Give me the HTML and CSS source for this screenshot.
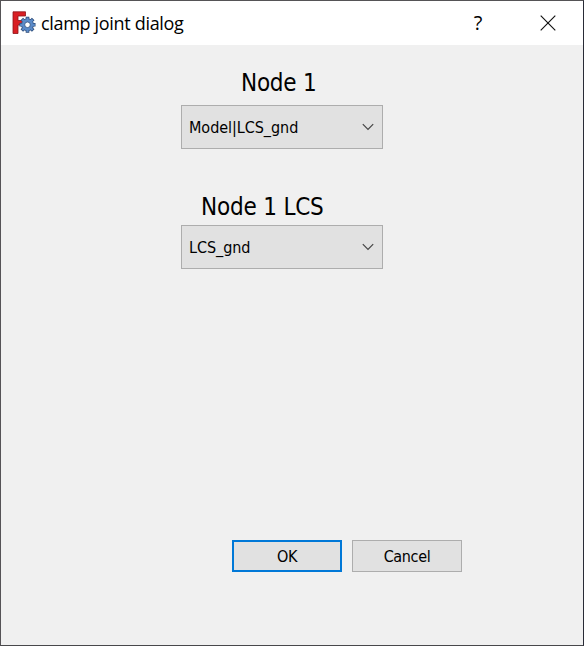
FILE: index.html
```html
<!DOCTYPE html>
<html lang="en">
<head>
<meta charset="utf-8">
<title>clamp joint dialog</title>
<link rel="stylesheet" href="styles.css">
</head>
<body>
<div class="dialog">
  <header class="titlebar">
    <svg class="app-icon" viewBox="0 0 24 24" width="24" height="24">
      <path d="M1 .8H13.5V5H6V9.5H11V14H6V22.5H1Z" fill="#d91f24" stroke="#8c1519" stroke-width=".8"/>
      <g transform="translate(15.5 13.8)">
        <g stroke="#2b4a78" stroke-width="3.6">
          <path d="M0-8V8M-8 0H8M-5.7-5.7L5.7 5.7M-5.7 5.7L5.7-5.7"/>
        </g>
        <circle r="6" fill="#5b8bc9" stroke="#2b4a78" stroke-width=".8"/>
        <g stroke="#5b8bc9" stroke-width="2.2">
          <path d="M0-7.3V7.3M-7.3 0H7.3M-5.2-5.2L5.2 5.2M-5.2 5.2L5.2-5.2"/>
        </g>
        <circle r="2.8" fill="#fff" stroke="#2b4a78" stroke-width=".8"/>
      </g>
    </svg>
    <h1 class="title">clamp joint dialog</h1>
    <button class="caption help">?</button>
    <button class="caption close" aria-label="Close">
      <svg viewBox="0 0 16 16" width="16" height="16"><path d="M.7.7L15.3 15.3M15.3.7L.7 15.3" stroke="#111" stroke-width="1.15"/></svg>
    </button>
  </header>
  <main class="content">
    <h2 class="label label-node">Node 1</h2>
    <div class="combo">
      <span>Model|LCS_gnd</span>
      <svg viewBox="0 0 12 8" width="12" height="8"><path d="M.8 1.2L6 6.4L11.2 1.2" fill="none" stroke="#444" stroke-width="1.2"/></svg>
    </div>
    <h2 class="label label-lcs">Node 1 LCS</h2>
    <div class="combo">
      <span>LCS_gnd</span>
      <svg viewBox="0 0 12 8" width="12" height="8"><path d="M.8 1.2L6 6.4L11.2 1.2" fill="none" stroke="#444" stroke-width="1.2"/></svg>
    </div>
    <div class="actions">
      <button class="btn primary">OK</button>
      <button class="btn">Cancel</button>
    </div>
  </main>
</div>
</body>
</html>
```
FILE: styles.css
```css
* { box-sizing: border-box; }
body { margin: 0; color: #000; font-family: "DejaVu Sans Condensed", "DejaVu Sans", sans-serif; font-stretch: condensed; }
button { margin: 0; padding: 0; font: inherit; color: inherit; }
svg { display: block; flex: none; }
.dialog {
  width: 584px; height: 646px;
  display: flex; flex-direction: column;
  border: 1px solid #555356; border-right-color: #292b36; border-bottom-color: #48484b;
  background: #f0f0f0;
}
.titlebar { display: flex; align-items: center; height: 44px; padding-left: 11px; background: #fff; }
.title {
  flex: 1; margin: 0 0 0 5px;
  font: 400 18px/24px "Open Sans", "Noto Sans", sans-serif;
  letter-spacing: -0.32px; white-space: nowrap;
}
.caption { display: flex; align-items: center; justify-content: center; width: 70px; height: 44px; border: 0; background: transparent; }
.help { font: 400 20px/24px "Open Sans", sans-serif; }
.content { flex: 1; display: flex; flex-direction: column; padding-left: 180px; }
.label { margin: 0; height: 30px; font-weight: 400; font-size: 24px; line-height: 30px; white-space: nowrap; }
.label-node { margin: 23px 0 7px 60px; letter-spacing: -0.25px; }
.label-lcs { margin: 43px 0 3px 20px; letter-spacing: -0.2px; }
.combo {
  display: flex; align-items: center; justify-content: space-between;
  width: 202px; height: 44px; padding: 0 8px 0 7px;
  border: 1px solid #adadad; background: #e1e1e1;
  font-size: 16px; letter-spacing: -0.05px; white-space: nowrap;
}
.actions { display: flex; gap: 10px; margin: 271px 0 0 51px; }
.btn { width: 110px; height: 32px; border: 1px solid #adadad; background: #e1e1e1; font-size: 16px; letter-spacing: -0.35px; }
.primary { border: 2px solid #0078d7; }
```
